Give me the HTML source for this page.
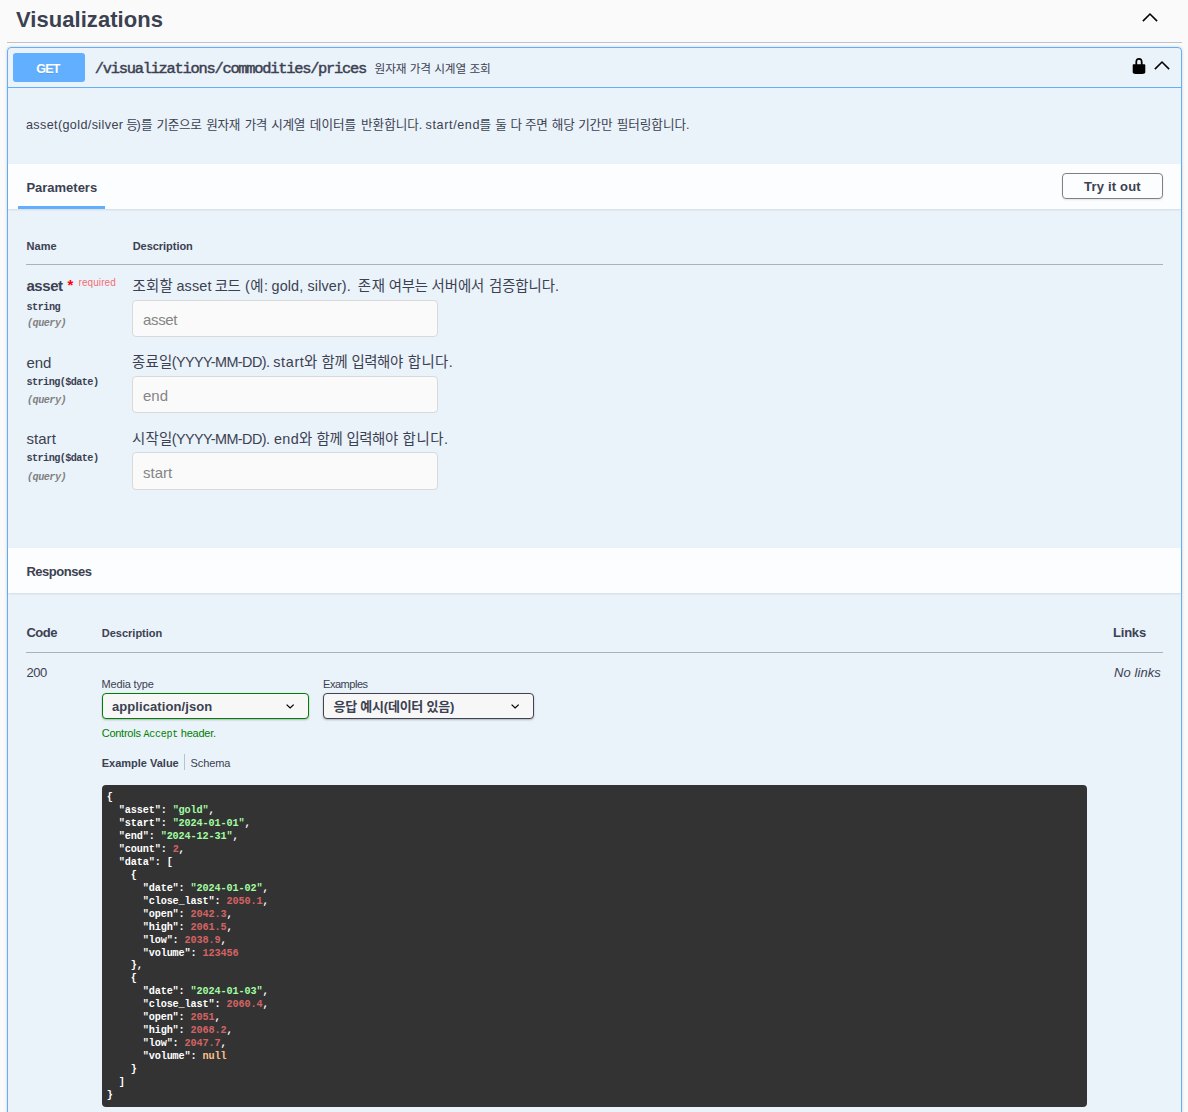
<!DOCTYPE html>
<html lang="ko">
<head>
<meta charset="utf-8">
<title>Visualizations</title>
<style>
*{box-sizing:border-box;margin:0;padding:0}
html,body{width:1188px;height:1112px;overflow:hidden;background:#fafafa}
body{position:relative;font-family:"Liberation Sans","Noto Sans CJK KR",sans-serif;color:#3b4151;-webkit-font-smoothing:antialiased}
.mono{font-family:"Liberation Mono","Noto Sans CJK KR",monospace}
.abs{position:absolute;white-space:nowrap;line-height:1}
/* tag header */
.tag{position:absolute;left:7px;top:0;width:1175px;height:43px;border-bottom:1px solid rgba(59,65,81,.3)}
.tag h3{position:absolute;left:9px;top:6px;font-size:22px;font-weight:700;line-height:28px;letter-spacing:.05px;color:#3b4151;white-space:nowrap}
.tag svg{position:absolute;left:1133px;top:7px}
/* opblock */
.opblock{position:absolute;left:7px;top:47px;width:1175px;height:1090px;border:1px solid #61affe;border-radius:4px;background:rgba(97,175,254,.1);box-shadow:0 0 3px rgba(0,0,0,.19)}
.inner{position:absolute;left:-8px;top:-48px;width:1188px;height:1112px}
.summary-line{position:absolute;left:8px;top:87px;width:1173px;height:1px;background:#61affe}
.method{position:absolute;left:13px;top:53px;width:72px;height:29px;border-radius:3px;background:#61affe;color:#fff;font-weight:700;font-size:12.6px;line-height:32px;padding-right:2px;letter-spacing:-.35px;text-align:center;text-shadow:0 1px 0 rgba(0,0,0,.1)}
.path{left:94.8px;top:61.8px;font-size:15.4px;font-weight:400;-webkit-text-stroke:.45px #3b4151;color:#3b4151}
.sdesc{left:374.5px;top:63.3px;font-size:11.7px;letter-spacing:-.09px}
.lock{position:absolute;left:1130px;top:57px}
.arrow2{position:absolute;left:1152px;top:55.3px}
.odesc{left:26.4px;top:118.5px;font-size:12.6px;letter-spacing:.13px}
.sechead{position:absolute;left:8px;width:1173px;height:45px;background:rgba(255,255,255,.8);box-shadow:0 1px 2px rgba(0,0,0,.1)}
.sechead h4{position:absolute;left:18.4px;top:0;font-size:13px;font-weight:700;line-height:47px;color:#3b4151;white-space:nowrap}
.underline{position:absolute;left:10.3px;top:41.5px;width:86.5px;height:3.6px;background:#61affe}
.tryout{position:absolute;left:1054px;top:9px;width:101px;height:26px;border:1px solid gray;border-radius:4px;font-size:13px;font-weight:700;line-height:25px;text-align:center;color:#3b4151;box-shadow:0 1px 2px rgba(0,0,0,.1);background:transparent}
.bx{position:absolute;left:0;top:0}
.tryout span,.sel span{position:relative}
.hline{position:absolute;left:26px;width:1137px;height:1px;background:rgba(59,65,81,.37)}
.th{font-weight:700;color:#3b4151}
.pname{font-size:15px}
.req{color:red}
.reqtxt{font-size:10px;color:rgba(255,0,0,.6)}
.ptype{font-size:10.2px;font-weight:700;letter-spacing:-.4px}
.pin{font-size:10.2px;font-weight:700;font-style:italic;color:gray;letter-spacing:-.4px}
.pdesc{left:132.5px;font-size:14.4px}
.inp{position:absolute;left:132px;width:306px;height:37px;border:1px solid #d9d9d9;border-radius:4px;background:#fafafa;font-size:15px;line-height:37px;padding-left:10px;color:#858585}
.sel{position:absolute;top:693px;height:26px;border:1px solid #41444e;border-radius:4px;background:#f7f7f7;box-shadow:0 1px 2px 0 rgba(0,0,0,.25);font-size:13px;font-weight:700;line-height:25px;color:#3b4151;white-space:nowrap}
.sel svg{position:absolute;top:8.5px}
.small{font-size:11px}
.code{position:absolute;left:102px;top:785px;width:985px;height:321.5px;background:#333;border-radius:4px;color:#fff;padding:7.1px 4.8px 0}
.code pre{font-family:"Liberation Mono","Noto Sans CJK KR",monospace;font-size:10.2px;font-weight:700;line-height:12.96px;letter-spacing:-.13px;white-space:pre;color:#fff}
.runs{position:absolute;left:0;white-space:nowrap;line-height:1}
.runs span{position:absolute;top:0;white-space:pre}
/*FIT*/
#t_title{letter-spacing:0.05px}
#t_get{letter-spacing:-0.76px}
#t_path{letter-spacing:-1.26px}
#t_sdesc{letter-spacing:-0.08px}
#t_params{letter-spacing:-0.01px}
#t_try{letter-spacing:0.19px}
#t_name{letter-spacing:0.13px}
#t_desc1{letter-spacing:-0.04px}
#t_asset{letter-spacing:-0.41px}
#t_req{letter-spacing:0.08px}
#t_str1{letter-spacing:-0.51px}
#t_q1{letter-spacing:-0.53px}
#t_ph1{letter-spacing:-0.35px}
#t_end{letter-spacing:-0.05px}
#t_str2{letter-spacing:-0.58px}
#t_str3{letter-spacing:-0.58px}
#t_q2{letter-spacing:-0.53px}
#t_q3{letter-spacing:-0.53px}
#t_start{letter-spacing:0.06px}
#t_resp{letter-spacing:-0.46px}
#t_code{letter-spacing:-0.43px}
#t_desc2{letter-spacing:0.01px}
#t_links{letter-spacing:-0.21px}
#t_200{letter-spacing:-0.43px}
#t_nolinks{letter-spacing:0.09px}
#t_media{letter-spacing:-0.15px}
#t_examples{letter-spacing:-0.46px}
#t_appjson{letter-spacing:0.08px}
#t_ex{letter-spacing:-0.23px}
#t_controls{letter-spacing:-0.25px}
#t_exval{letter-spacing:0px}
#t_schema{letter-spacing:-0.11px}
/*ENDFIT*/
.s{color:#a2fca2}.n{color:#d36363}.k{color:#fcc28c}
</style>
</head>
<body>
<div class="tag">
  <h3 id="t_title">Visualizations</h3>
  <svg width="20" height="20" viewBox="0 0 20 20"><path d="M2.9 14.1L10 7l7.1 7.1" fill="none" stroke="#000" stroke-width="1.55"/></svg>
</div>
<div class="opblock"><div class="inner">
  <div class="method"><span id="t_get">GET</span></div>
  <div class="abs mono path" id="t_path">/visualizations/commodities/prices</div>
  <div class="abs sdesc" id="t_sdesc">원자재 가격 시계열 조회</div>
  <svg class="lock" width="18" height="18" viewBox="0 0 20 20"><path d="M15.8 8H14V5.6C14 2.703 12.665 1 10 1 7.334 1 6 2.703 6 5.6V8H4c-.553 0-1 .646-1 1.199V17c0 .549.428 1.139.951 1.307l1.197.387C5.672 18.861 6.55 19 7.1 19h5.8c.549 0 1.428-.139 1.951-.307l1.196-.387c.524-.167.953-.757.953-1.306V9.199C17 8.646 16.352 8 15.8 8zM12 8H8V5.199C8 3.754 8.797 3 10 3c1.203 0 2 .754 2 2.199V8z" fill="#000"/></svg>
  <svg class="arrow2" width="20" height="20" viewBox="0 0 20 20"><path d="M2.9 14.1L10 7l7.1 7.1" fill="none" stroke="#000" stroke-width="1.55"/></svg>
  <div class="summary-line"></div>

  <div class="runs" id="t_odesc" style="top:118.5px;font-size:12.6px"><span style="left:25.9px;letter-spacing:0.38px">asset(gold/silver</span><span style="left:126.3px;letter-spacing:-0.40px">등</span><span style="left:136.6px;letter-spacing:0.00px">)</span><span style="left:141.1px;letter-spacing:0.52px">를</span> <span style="left:156.5px;letter-spacing:-0.34px">기준으로</span> <span style="left:206.3px;letter-spacing:-0.40px">원자재</span> <span style="left:244.7px;letter-spacing:-0.40px">가격</span> <span style="left:271.3px;letter-spacing:-0.40px">시계열</span> <span style="left:309.8px;letter-spacing:0.01px">데이터를</span> <span style="left:361.0px;letter-spacing:-0.02px">반환합니다.</span> <span style="left:425.6px;letter-spacing:0.61px">start/end</span><span style="left:479.4px;letter-spacing:0.60px">를</span> <span style="left:495.2px;letter-spacing:0.32px">둘</span> <span style="left:510.4px;letter-spacing:-0.40px">다</span> <span style="left:525.1px;letter-spacing:-0.40px">주면</span> <span style="left:551.8px;letter-spacing:-0.24px">해당</span> <span style="left:578.3px;letter-spacing:-0.28px">기간만</span> <span style="left:616.7px;letter-spacing:-0.03px">필터링합니다.</span></div>

  <div class="sechead" style="top:164px">
    <h4><span id="t_params">Parameters</span></h4>
    <div class="underline"></div>
    <div class="tryout"><span id="t_try">Try it out</span></div>
  </div>

  <div class="abs th" style="left:26.4px;top:241px;font-size:11px" id="t_name">Name</div>
  <div class="abs th" style="left:132.7px;top:241px;font-size:11px" id="t_desc1">Description</div>
  <div class="hline" style="top:264px"></div>

  <!-- row 1 -->
  <div class="abs pname" style="left:26.4px;top:278px;font-weight:700" id="t_asset">asset</div>
  <div class="abs req" style="left:67.5px;top:277px;font-size:15px;font-weight:700" id="t_star">*</div>
  <div class="abs reqtxt" style="left:78.5px;top:278px" id="t_req">required</div>
  <div class="abs mono ptype" style="left:26.5px;top:302.6px" id="t_str1">string</div>
  <div class="abs mono pin" style="left:27px;top:319.3px" id="t_q1">(query)</div>
  <div class="runs" id="t_pd1" style="top:278.5px;font-size:14.4px"><span style="left:132.4px;letter-spacing:0.30px">조회할</span> <span style="left:176.4px;letter-spacing:0.15px">asset</span> <span style="left:214.7px;letter-spacing:-0.33px">코드</span> <span style="left:244.9px;letter-spacing:0.60px">(예:</span> <span style="left:271.5px;letter-spacing:0.13px">gold, silver).</span> <span style="left:357.8px;letter-spacing:0.60px">존재</span> <span style="left:388.8px;letter-spacing:-0.30px">여부는</span> <span style="left:431.5px;letter-spacing:-0.04px">서버에서</span> <span style="left:488.9px;letter-spacing:0.00px">검증합니다.</span></div>
  <div class="inp" style="top:300px"><span id="t_ph1">asset</span></div>
  <!-- row 2 -->
  <div class="abs pname" style="left:26.4px;top:355px" id="t_end">end</div>
  <div class="abs mono ptype" style="left:26.5px;top:378.2px" id="t_str2">string($date)</div>
  <div class="abs mono pin" style="left:27px;top:396.4px" id="t_q2">(query)</div>
  <div class="runs" id="t_pd2" style="top:355.3px;font-size:14.4px"><span style="left:132.0px;letter-spacing:0.24px">종료일</span><span style="left:171.7px;letter-spacing:-0.56px">(YYYY-MM-DD).</span> <span style="left:273.3px;letter-spacing:0.63px">start</span><span style="left:304.0px;letter-spacing:0.60px">와</span> <span style="left:321.5px;letter-spacing:-0.23px">함께</span> <span style="left:351.4px;letter-spacing:-0.40px">입력해야</span> <span style="left:407.7px;letter-spacing:0.45px">합니다.</span></div>
  <div class="inp" style="top:376px"><span id="t_ph2">end</span></div>
  <!-- row 3 -->
  <div class="abs pname" style="left:26.4px;top:431px" id="t_start">start</div>
  <div class="abs mono ptype" style="left:26.5px;top:454px" id="t_str3">string($date)</div>
  <div class="abs mono pin" style="left:27px;top:472.6px" id="t_q3">(query)</div>
  <div class="runs" id="t_pd3" style="top:431.5px;font-size:14.4px"><span style="left:132.0px;letter-spacing:0.24px">시작일</span><span style="left:171.7px;letter-spacing:-0.56px">(YYYY-MM-DD).</span> <span style="left:273.9px;letter-spacing:0.40px">end</span><span style="left:299.1px;letter-spacing:0.60px">와</span> <span style="left:316.4px;letter-spacing:-0.08px">함께</span> <span style="left:346.4px;letter-spacing:-0.40px">입력해야</span> <span style="left:402.6px;letter-spacing:0.58px">합니다.</span></div>
  <div class="inp" style="top:452px;height:38px;line-height:39.5px"><span id="t_ph3">start</span></div>

  <div class="sechead" style="top:548px">
    <h4><span id="t_resp">Responses</span></h4>
  </div>

  <div class="abs th" style="left:26.4px;top:626px;font-size:13px" id="t_code">Code</div>
  <div class="abs th" style="left:101.7px;top:627.8px;font-size:11px" id="t_desc2">Description</div>
  <div class="abs th" style="left:1113px;top:626px;font-size:13px" id="t_links">Links</div>
  <div class="hline" style="top:652px"></div>

  <div class="abs" style="left:26.4px;top:666px;font-size:13px" id="t_200">200</div>
  <div class="abs" style="left:1114px;top:666px;font-size:13px;font-style:italic" id="t_nolinks">No links</div>

  <div class="abs small" style="left:101.5px;top:679px" id="t_media">Media type</div>
  <div class="abs small" style="left:323px;top:679px" id="t_examples">Examples</div>
  <div class="sel" style="left:102px;width:207px;padding-left:9px;border-color:green"><span id="t_appjson">application/json</span>
    <svg style="left:182.8px;top:9.7px" width="9" height="6" viewBox="0 0 9 6"><path d="M.6 .6l3.55 3.4 3.55-3.4" fill="none" stroke="#000" stroke-width="1.25"/></svg></div>
  <div class="sel" style="left:323px;width:211px;padding-left:9.5px"><span id="t_ex">응답 예시(데이터 있음)</span>
    <svg style="left:187.3px;top:9.7px" width="9" height="6" viewBox="0 0 9 6"><path d="M.6 .6l3.55 3.4 3.55-3.4" fill="none" stroke="#000" stroke-width="1.25"/></svg></div>
  <div class="abs small" style="left:101.7px;top:727.6px;color:green" id="t_controls">Controls <span class="mono" style="font-size:10px">Accept</span> header.</div>
  <div class="abs" style="left:101.7px;top:758px;font-size:11px;font-weight:700" id="t_exval">Example Value</div>
  <div style="position:absolute;left:184px;top:754.4px;width:1px;height:15.3px;background:rgba(0,0,0,.2)"></div>
  <div class="abs" style="left:190.6px;top:758px;font-size:11px" id="t_schema">Schema</div>

  <div class="code"><pre id="t_pre">{
  "asset": <span class="s">"gold"</span>,
  "start": <span class="s">"2024-01-01"</span>,
  "end": <span class="s">"2024-12-31"</span>,
  "count": <span class="n">2</span>,
  "data": [
    {
      "date": <span class="s">"2024-01-02"</span>,
      "close_last": <span class="n">2050.1</span>,
      "open": <span class="n">2042.3</span>,
      "high": <span class="n">2061.5</span>,
      "low": <span class="n">2038.9</span>,
      "volume": <span class="n">123456</span>
    },
    {
      "date": <span class="s">"2024-01-03"</span>,
      "close_last": <span class="n">2060.4</span>,
      "open": <span class="n">2051</span>,
      "high": <span class="n">2068.2</span>,
      "low": <span class="n">2047.7</span>,
      "volume": <span class="k">null</span>
    }
  ]
}</pre></div>
</div></div>
</body>
</html>
